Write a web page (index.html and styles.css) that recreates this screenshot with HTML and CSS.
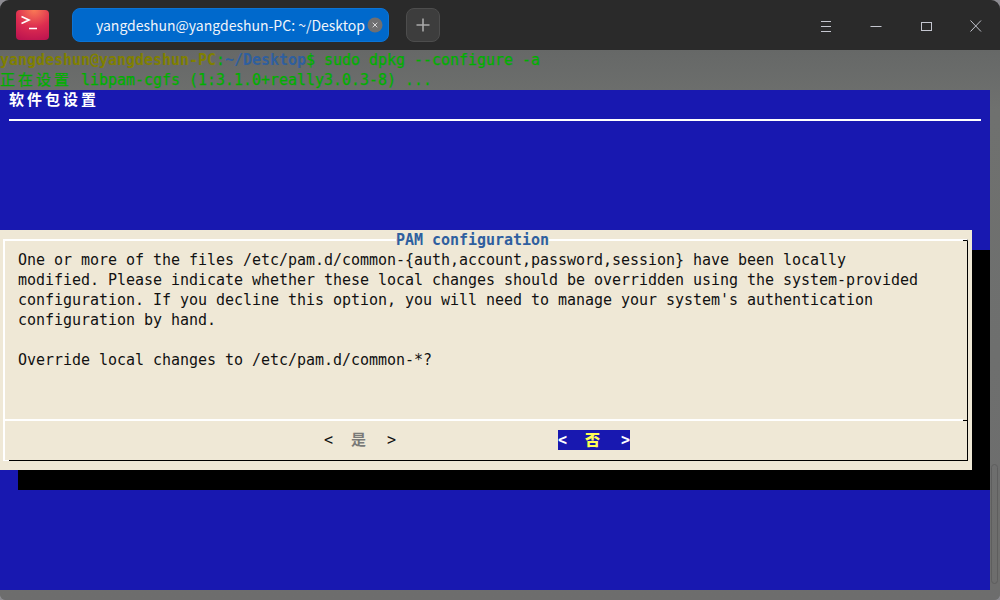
FILE: index.html
```html
<!DOCTYPE html>
<html lang="zh">
<head>
<meta charset="utf-8">
<title>Terminal</title>
<link rel="stylesheet" href="styles.css">
</head>
<body>
<div class="window">
  <header class="titlebar">
    <svg class="app-icon" width="33" height="30" viewBox="0 0 33 30">
      <defs>
        <radialGradient id="appg" cx="0.55" cy="0" r="1.05">
          <stop offset="0" stop-color="#f97a55"/>
          <stop offset="0.55" stop-color="#dc2c50"/>
          <stop offset="1" stop-color="#bd1450"/>
        </radialGradient>
      </defs>
      <rect width="33" height="30" rx="4" fill="url(#appg)"/>
      <path d="M5.5 6.5l7.5 3.5-7.5 3.5" fill="none" stroke="#fff" stroke-width="1.6"/>
      <path d="M13 18.5h8" fill="none" stroke="#fff" stroke-width="1.4"/>
    </svg>
    <div class="tab">
      <span class="tab-title">yangdeshun@yangdeshun-PC: ~/Desktop</span>
      <span class="tab-close">
        <svg width="16" height="16" viewBox="0 0 16 16"><circle cx="8" cy="8" r="7.5" fill="#6f6f71"/><path d="M5.7 5.7l4.6 4.6M10.3 5.7l-4.6 4.6" stroke="#d8d8da" stroke-width="1"/></svg>
      </span>
    </div>
    <button class="add-tab">
      <svg width="14" height="14" viewBox="0 0 14 14"><path d="M7 0.5v13M0.5 7h13" stroke="#a9a9a9" stroke-width="1.6"/></svg>
    </button>
    <div class="win-controls">
      <svg class="win-btn" width="12" height="12" viewBox="0 0 12 12"><path d="M1 1.5h10M1 6.5h10M1 11.5h10" stroke="#c4c6cf" stroke-width="1"/></svg>
      <svg class="win-btn" width="12" height="12" viewBox="0 0 12 12"><path d="M0.5 6.5h11" stroke="#c4c6cf" stroke-width="1"/></svg>
      <svg class="win-btn" width="12" height="12" viewBox="0 0 12 12"><rect x="1.5" y="2.5" width="10" height="8" fill="none" stroke="#c4c6cf" stroke-width="1"/></svg>
      <svg class="win-btn" width="12" height="12" viewBox="0 0 12 12"><path d="M0.5 0.5l10.5 11M11 0.5l-10.5 11" stroke="#c4c6cf" stroke-width="1"/></svg>
    </div>
  </header>
  <main class="terminal">
    <div class="row"><b class="user">yangdeshun@yangdeshun-PC</b><span class="green">:</span><b class="path">~/Desktop</b><span class="green">$ sudo dpkg --configure -a</span></div>
    <div class="row green"><span class="cjk">正在设置</span> libpam-cgfs (1:3.1.0+really3.0.3-8) ...</div>
    <section class="screen">
      <div class="row screen-title"><span class="cjk">软件包设置</span></div>
      <div class="screen-rule"></div>
      <div class="dialog">
        <div class="frame">
          <h1 class="dialog-title">PAM configuration</h1>
          <div class="message">
            <div class="row">One or more of the files /etc/pam.d/common-{auth,account,password,session} have been locally</div>
            <div class="row">modified. Please indicate whether these local changes should be overridden using the system-provided</div>
            <div class="row">configuration. If you decline this option, you will need to manage your system's authentication</div>
            <div class="row">configuration by hand.</div>
            <div class="row">&nbsp;</div>
            <div class="row">Override local changes to /etc/pam.d/common-*?</div>
          </div>
          <div class="divider"></div>
          <div class="actions">
            <div class="row choice">&lt;  <span class="cjk gray">是</span>  &gt;</div>
            <div class="row choice selected">&lt;  <b class="cjk yellow">否</b>  &gt;</div>
          </div>
        </div>
      </div>
    </section>
    <div class="scrollbar"></div>
  </main>
</div>
</body>
</html>
```
FILE: styles.css
```css
* { box-sizing: border-box; }
html, body { margin: 0; height: 100%; background: #8d8c92; overflow: hidden; }
.window {
  width: 1000px; height: 600px; position: relative; overflow: hidden;
  border-radius: 9px 9px 6px 6px;
  background: #6d6f6e;
}
.titlebar {
  height: 50px; background: #2a2a2a;
  display: flex; align-items: center; padding-left: 16px;
}
.app-icon { flex: none; margin-right: 23px; }
.tab {
  width: 317px; height: 34px; background: #0069cc; border-radius: 8px;
  display: flex; align-items: center; padding-left: 23px; flex: none;
  border: 1px solid #0b74d6;
}
.tab-title {
  font: 14px/20px "Noto Sans CJK SC", "Noto Sans", sans-serif; color: #f0f4fa; white-space: nowrap; width: 271px;
}
.tab-close { display: flex; flex: none; }
.add-tab {
  width: 34px; height: 34px; margin-left: 17px; flex: none; padding: 0;
  background: #3d3d3d; border: 1px solid #4d4d4d; border-radius: 8px;
  display: flex; align-items: center; justify-content: center;
}
.win-controls { margin-left: auto; display: flex; align-items: center; gap: 38px; padding: 2px 18px 0 0; }
.win-btn { flex: none; display: block; }
.terminal {
  position: relative; height: 550px;
  background: linear-gradient(180deg, #666867 0, #6f716f 60px, #6d6d6d 100%);
  font: 15px/20px "DejaVu Sans Mono", monospace;
  letter-spacing: -0.03px;
}
.row { height: 20px; white-space: pre; }
.cjk { font-family: "Noto Sans CJK SC", sans-serif; letter-spacing: 3px; line-height: 0; }
.green { color: #00b000; -webkit-text-stroke: 0.25px #00b000; }
.user { color: #808000; }
.path { color: #2f5f9f; }
.screen {
  position: absolute; left: 0; top: 40px; width: 990px; height: 500px;
  background: #1818b0;
}
.screen-title { color: #fff; font-weight: 700; padding-left: 9px; }
.screen-rule { height: 2px; margin: 9px 9px 0; background: #fff; }
.dialog {
  margin-top: 109px; width: 972px; height: 240px; padding: 9px 4px 9px 3px;
  background: #efe8d6; box-shadow: 18px 20px 0 #000; color: #111;
}
.frame {
  position: relative; height: 222px;
  border-style: solid; border-color: #fff #000 #000 #fff; border-width: 2px 1px 1px 2px;
}
.frame::before {
  content: ""; position: absolute; left: -2px; bottom: -1px; width: 6px; height: 1px; background: #fff;
}
.frame::after {
  content: ""; position: absolute; right: 0; top: -1px; width: 4px; height: 1px; background: #000;
}
.dialog-title {
  position: absolute; left: 391px; top: -11px; margin: 0;
  font: 700 15px/20px "DejaVu Sans Mono", monospace; letter-spacing: -0.03px;
  color: #2f5f9f; background: #efe8d6;
}
.message { height: 178px; padding: 9px 0 0 13px; }
.divider { position: relative; height: 2px; margin-right: 4px; background: #fff; }
.divider::after {
  content: ""; position: absolute; right: -4px; top: 1px; width: 4px; height: 1px; background: #000;
}
.actions { display: flex; gap: 162px; padding: 9px 0 0 319px; }
.choice { width: 72px; }
.gray { color: #7a7a78; font-weight: 700; }
.selected { background: #1818b0; color: #fff; font-weight: 700; }
.yellow { color: #ffff55; }
.scrollbar {
  position: absolute; left: 991px; top: 414px; width: 7px; height: 120px;
  border: 1px solid #5e5e5e; border-radius: 4px;
}
```
